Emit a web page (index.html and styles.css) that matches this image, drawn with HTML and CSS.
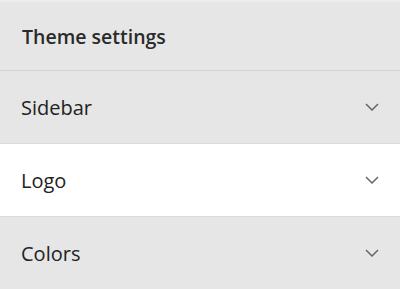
FILE: index.html
```html
<!DOCTYPE html>
<html>
<head>
<meta charset="utf-8">
<link rel="stylesheet" href="styles.css">
</head>
<body>
<div class="panel">
  <div class="header">Theme settings</div>
  <div class="item"><span class="label">Sidebar</span><svg class="chev" width="14" height="8" viewBox="0 0 14 8"><path d="M1 1 L7 7 L13 1" fill="none" stroke="#666" stroke-width="1.5"/></svg></div>
  <div class="item active"><span class="label">Logo</span><svg class="chev" width="14" height="8" viewBox="0 0 14 8"><path d="M1 1 L7 7 L13 1" fill="none" stroke="#666" stroke-width="1.5"/></svg></div>
  <div class="item"><span class="label">Colors</span><svg class="chev" width="14" height="8" viewBox="0 0 14 8"><path d="M1 1 L7 7 L13 1" fill="none" stroke="#666" stroke-width="1.5"/></svg></div>
</div>
</body>
</html>
```
FILE: styles.css
```css
html, body {
  margin: 0;
  padding: 0;
  background: #e6e6e6;
}
.panel {
  width: 400px;
  height: 289px;
  overflow: hidden;
  font-family: "Open Sans", "Noto Sans", sans-serif;
  color: #222;
  background: #e6e6e6;
  border-top: 2px solid #ececec;
  box-sizing: border-box;
}
.header {
  height: 68px;
  display: flex;
  align-items: center;
  padding-left: 22px;
  font-size: 19.5px;
  font-weight: 600;
  color: #2a2a2a;
  border-bottom: 1px solid #d2d2d2;
}
.item {
  height: 73px;
  box-sizing: border-box;
  display: flex;
  align-items: center;
  justify-content: space-between;
  padding: 0 21px 0 21px;
  font-size: 20px;
  border-bottom: 1px solid #dadada;
}
.item.active {
  background: #ffffff;
}
.chev {
  display: block;
}
```
